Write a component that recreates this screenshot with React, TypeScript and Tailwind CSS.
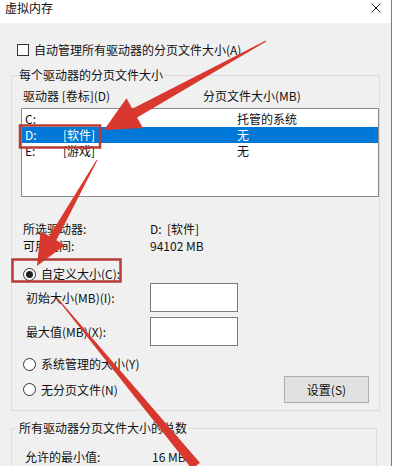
import type { ReactNode } from "react";

const font = { fontFamily: '"Noto Sans CJK SC", "Liberation Sans", sans-serif' };

function Radio({ checked, children }: { checked?: boolean; children: ReactNode }) {
  return (
    <div className="flex items-center gap-[5px]">
      <span className="flex h-[13px] w-[13px] items-center justify-center rounded-full border border-[#333] bg-white">
        {checked && <span className="h-[7px] w-[7px] rounded-full bg-[#222]" />}
      </span>
      <span>{children}</span>
    </div>
  );
}

function Group({ title, className, children }: { title: string; className: string; children: ReactNode }) {
  return (
    <fieldset className={`border border-[#dcdcdc] ${className}`}>
      <legend className="ml-[6px] px-[1px] text-[12px] leading-[16px]">{title}</legend>
      {children}
    </fieldset>
  );
}

const rows = [
  { drive: "C:", label: "", size: "托管的系统", selected: false },
  { drive: "D:", label: "[软件]", size: "无", selected: true },
  { drive: "E:", label: "[游戏]", size: "无", selected: false },
];

function App() {
  return (
    <div className="relative flex h-[466px] w-[394px] overflow-hidden bg-white text-[12px] leading-[16px] text-[#111]" style={font}>
      <div className="flex h-full w-[392px] flex-col border-r border-[#7d7d7d] bg-[#f0f0f0]">
        {/* title bar */}
        <div className="flex h-[23px] shrink-0 items-start justify-between bg-white pl-[5px] pr-[10px]">
          <span className="text-[12px] leading-[16px]">虚拟内存</span>
          <svg width="10" height="10" viewBox="0 0 10 10" className="mt-[3px]">
            <path d="M0.5 0.5 L9.5 9.5 M9.5 0.5 L0.5 9.5" stroke="#222" strokeWidth="1" />
          </svg>
        </div>

        <div className="flex flex-col pl-[11px]">
          <div className="mt-[19px] flex h-[16px] items-center gap-[5px] pl-[6px]">
            <span className="h-[12px] w-[12px] border border-[#333] bg-white" />
            <span>自动管理所有驱动器的分页文件大小(A)</span>
          </div>

          <Group title="每个驱动器的分页文件大小" className="mt-[9px] w-[369px] pb-[7px]">
            <div className="mt-[5px] flex h-[16px] items-center pl-[11px]">
              <span className="w-[180px]">驱动器 [卷标](D)</span>
              <span>分页文件大小(MB)</span>
            </div>
            <div className="ml-[9px] mt-[4px] h-[89px] border border-[#8a8a8a] bg-white pt-[2px]">
              {rows.map((r) => (
                <div
                  key={r.drive}
                  className={`flex h-[16px] items-center pl-[3px] ${r.selected ? "bg-[#0078d7] text-white" : ""}`}
                >
                  <span className="w-[38px]">{r.drive}</span>
                  <span className="w-[174px]">{r.label}</span>
                  <span>{r.size}</span>
                </div>
              ))}
            </div>

            <div className="ml-[11px] mt-[23px] flex h-[17px] items-center">
              <span className="w-[127px]">所选驱动器:</span>
              <span>D:&nbsp;&nbsp;[软件]</span>
            </div>
            <div className="ml-[11px] flex h-[17px] items-center">
              <span className="w-[127px]">可用空间:</span>
              <span>94102 MB</span>
            </div>

            <div className="ml-[11px] mt-[12px] flex h-[16px] items-center">
              <Radio checked>自定义大小(C):</Radio>
            </div>
            <div className="ml-[14px] mt-[1px] flex h-[29px] items-center">
              <span className="w-[124px]">初始大小(MB)(I):</span>
              <span className="h-[29px] w-[88px] border border-[#7a7a7a] bg-white" />
            </div>
            <div className="ml-[14px] mt-[5px] flex h-[29px] items-center">
              <span className="w-[124px]">最大值(MB)(X):</span>
              <span className="h-[29px] w-[88px] border border-[#7a7a7a] bg-white" />
            </div>
            <div className="ml-[11px] mt-[10px] flex h-[16px] items-center">
              <Radio>系统管理的大小(Y)</Radio>
            </div>
            <div className="ml-[11px] mr-[10px] mt-[4px] flex h-[27px] items-center justify-between">
              <Radio>无分页文件(N)</Radio>
              <button className="h-[27px] w-[85px] border border-[#adadad] bg-[#e1e1e1] text-[12px]">
                设置(S)
              </button>
            </div>
          </Group>

          <Group title="所有驱动器分页文件大小的总数" className="mt-[9px] h-[80px] w-[366px]">
            <div className="ml-[13px] mt-[13px] flex h-[16px] items-center">
              <span className="w-[127px]">允许的最小值:</span>
              <span>16 MB</span>
            </div>
          </Group>
        </div>
      </div>

      {/* red annotations */}
      <svg className="pointer-events-none absolute inset-0" width="394" height="466" viewBox="0 0 394 466">
        <polygon
          points="266.2,41.4 265.8,40.6 132.3,108.8 126.5,98.3 104,130 142.9,128.1 137.1,117.6"
          fill="#d8382e"
        />
        <polygon
          points="97.4,160.2 96.6,159.8 49.3,236.2 40.6,231.3 37,266 65,245.1 56.3,240.2"
          fill="#d8382e"
        />
        <polygon points="57.4,297.7 56.6,298.3 192.1,469.2 199.9,462.8" fill="#d8382e" />
        <rect x="20" y="125.5" width="80" height="22" fill="none" stroke="#b93a35" strokeWidth="2.5" />
        <rect x="12.5" y="259.5" width="108" height="22" fill="none" stroke="#b93a35" strokeWidth="2.5" />
      </svg>
    </div>
  );
}

export default App;
